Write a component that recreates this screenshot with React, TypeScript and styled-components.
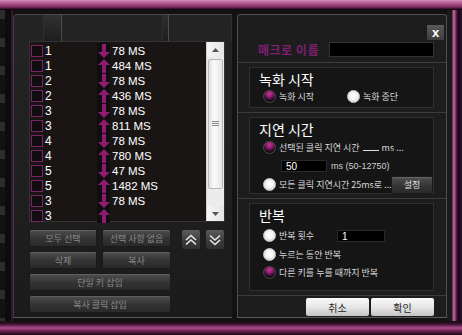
import React from 'react'
import styled, { createGlobalStyle } from 'styled-components'

const colors = {
  magenta: '#8e1c6e',
  panel: '#1d1d1d',
  box: '#151515',
  line: '#3a3a3a',
  text: '#e6e6e6',
  dim: '#9a9a9a'
}

const kr = `"Noto Sans CJK KR", "Noto Sans", sans-serif`
const latin = `"Liberation Sans", Arial, sans-serif`

const GlobalStyle = createGlobalStyle`
  html, body { margin: 0; padding: 0; background: #000; }
`

const Screen = styled.div`
  width: 462px;
  height: 335px;
  display: flex;
  flex-direction: column;
  background: #000;
  overflow: hidden;
`

const TopBar = styled.div`
  height: 10px;
  flex: none;
  background: linear-gradient(#d491bd 0, #b55a92 3px, #7d2c61 7px, #2a0c20 9px, #000 10px);
`

const Middle = styled.div`
  display: flex;
  height: 311px;
  flex: none;
`

const LeftStrip = styled.div`
  width: 11px;
  flex: none;
  border-right: 2px solid #3a1430;
  background:
    linear-gradient(90deg, transparent 5px, #0c0c0c 5px),
    repeating-linear-gradient(#2c2c2c 0 9px, #121212 9px 28px);
`

const Body = styled.div`
  flex: 1;
  display: flex;
  gap: 5px;
  padding-top: 4px;
  padding-bottom: 3px;
  background: #121212;
`

const RightFrame = styled.div`
  width: 15px;
  flex: none;
  background: linear-gradient(90deg, #1a1a1a 0 5px, #5c2249 5px, #c070a0 7px, #6a2452 9px, #140a12 11px, #2a1030 15px);
`

const BottomBar = styled.div`
  height: 14px;
  flex: none;
  background: linear-gradient(#0e0e0e 0, #3a1030 3px, #b04e8e 7px, #6a2050 10px, #1a0814 14px);
`

/* ---------- left panel ---------- */

const LeftPanel = styled.div`
  width: 218px;
  flex: none;
  display: flex;
  flex-direction: column;
  border-top: 1px solid #4a4a4a;
  border-left: 1px solid #3e3e3e;
  border-bottom: 1px solid #5a5a5a;
  border-radius: 4px 0 0 0;
  background: linear-gradient(#242424, #1b1b1b);
`

const HeaderRow = styled.div`
  display: flex;
  height: 26px;
`

const HeaderCell = styled.div<{ w?: number; lit?: boolean }>`
  width: ${p => (p.w ? `${p.w}px` : 'auto')};
  flex: ${p => (p.w ? 'none' : '1')};
  border-right: 1px solid ${p => (p.lit ? '#4c4c4c' : '#2e2e2e')};
  background: ${p => (p.lit ? 'linear-gradient(#303030, #1e1e1e)' : 'transparent')};
`

const ListBox = styled.div`
  margin-left: 15px;
  width: 194px;
  height: 179px;
  display: flex;
  border: 1px solid #333;
  background: #1a1515;
`

const Rows = styled.div`
  flex: 1;
  padding-top: 1px;
  display: flex;
  flex-direction: column;
`

const Row = styled.div`
  display: flex;
  align-items: center;
  height: 15px;
`

const Check = styled.div`
  width: 10px;
  height: 10px;
  margin-left: 1px;
  border: 1px solid #7a2468;
  background: #100c10;
`

const Num = styled.span`
  width: 52px;
  padding-left: 2px;
  font: 12px ${latin};
  color: #fff;
`

const ArrowCell = styled.div`
  width: 13px;
  height: 15px;
  display: flex;
  align-items: center;
  justify-content: center;
  background: #0f0d0e;
`

const Delay = styled.span`
  padding-left: 2px;
  font: 11.5px ${latin};
  color: #fff;
`

const ScrollBar = styled.div`
  width: 17px;
  display: flex;
  flex-direction: column;
  background: #ececec;
  border-left: 1px solid #d0d0d0;
`

const ScrollBtn = styled.div`
  height: 15px;
  display: flex;
  align-items: center;
  justify-content: center;
  background: linear-gradient(90deg, #f6f6f6, #e4e4e4);
`

const ScrollTrack = styled.div`
  flex: 1;
  display: flex;
  flex-direction: column;
  padding: 2px 1px;
`

const Thumb = styled.div`
  height: 128px;
  border: 1px solid #b8b8b8;
  border-radius: 2px;
  background: linear-gradient(90deg, #e2e2e2, #fafafa 40%, #e6e6e6);
  display: flex;
  align-items: center;
  justify-content: center;
`

const Grip = styled.div`
  width: 7px;
  height: 6px;
  background: repeating-linear-gradient(#8a8a8a 0 1px, transparent 1px 2px);
`

const Controls = styled.div`
  display: flex;
  gap: 10px;
  margin: 7px 0 0 15px;
`

const ButtonGrid = styled.div`
  display: grid;
  grid-template-columns: 68px 69px;
  grid-auto-rows: 18px;
  column-gap: 5px;
  row-gap: 4px;
`

const DarkButton = styled.div<{ wide?: boolean }>`
  grid-column: ${p => (p.wide ? '1 / 3' : 'auto')};
  display: flex;
  align-items: center;
  justify-content: center;
  border: 1px solid #1a1a1a;
  border-radius: 2px;
  background: linear-gradient(#4e4e4e, #333 55%, #2a2a2a);
  box-shadow: inset 0 1px 0 #606060;
  color: #8a8a8a;
  font: 9px ${kr};
`

const ArrowButtons = styled.div`
  display: flex;
  gap: 4px;
`

const MoveButton = styled.div`
  width: 18px;
  height: 19px;
  display: flex;
  align-items: center;
  justify-content: center;
  border: 1px solid #1e1e1e;
  border-radius: 3px;
  background: linear-gradient(#5c5c5c, #3a3a3a 60%, #303030);
`

/* ---------- right panel ---------- */

const RightPanel = styled.div`
  flex: 1;
  display: flex;
  flex-direction: column;
  border: 1px solid #4e4e4e;
  border-bottom-color: #5a5a5a;
  border-radius: 3px 3px 0 0;
  background: ${colors.panel};
`

const CloseRow = styled.div`
  display: flex;
  justify-content: flex-end;
  margin-top: 10px;
  padding-right: 2px;
`

const CloseButton = styled.div`
  width: 17px;
  height: 15px;
  display: flex;
  align-items: center;
  justify-content: center;
  background: linear-gradient(#5a5a5a, #3c3c3c);
  color: #fff;
  font: bold 13px ${latin};
  line-height: 15px;
`

const NameRow = styled.div`
  display: flex;
  align-items: center;
  height: 14px;
  margin-top: 2px;
  padding: 0 12px 0 20px;
  gap: 10px;
`

const NameLabel = styled.span`
  font: bold 12px ${kr};
  color: #7e1f70;
  letter-spacing: 0.5px;
`

const NameInput = styled.div`
  flex: 1;
  height: 13px;
  background: #000;
  border: 1px solid #333;
`

const SectionWrap = styled.div<{ first?: boolean }>`
  padding: 4px 12px 4px 11px;
  border-top: 1px solid #3c3c3c;
  margin-top: ${p => (p.first ? '6px' : '0')};
`

const SectionBox = styled.div<{ h: number }>`
  height: ${p => p.h}px;
  box-sizing: border-box;
  border: 1px solid #303030;
  background: ${colors.box};
  padding: 3px 0 0 9px;
  display: flex;
  flex-direction: column;
`

const Heading = styled.div`
  font: 14px ${kr};
  color: #fff;
  line-height: 17px;
  height: 17px;
`

const OptionRow = styled.div<{ mt?: number; indent?: number }>`
  display: flex;
  align-items: center;
  height: 13px;
  margin-top: ${p => p.mt ?? 0}px;
  padding-left: ${p => p.indent ?? 4}px;
`

const Radio = styled.div<{ on?: boolean }>`
  width: 13px;
  height: 13px;
  flex: none;
  border-radius: 50%;
  box-sizing: border-box;
  background: ${p =>
    p.on
      ? 'radial-gradient(circle at 50% 25%, #c03a92 0, #8a1a6c 35%, #3a0f30 58%, #121012 72%)'
      : 'radial-gradient(circle at 50% 45%, #ffffff 0, #f4f4f4 45%, #cfcfcf 80%, #9a9a9a 100%)'};
  border: 1px solid ${p => (p.on ? '#4a4a4a' : '#d0d0d0')};
`

const OptionLabel = styled.span<{ w?: number }>`
  margin-left: 3px;
  width: ${p => (p.w ? `${p.w}px` : 'auto')};
  font: 9px ${kr};
  color: #d8d8d8;
  white-space: nowrap;
`

const Blank = styled.span`
  display: inline-block;
  width: 16px;
  margin: 0 3px;
  border-bottom: 1px solid #ddd;
`

const Field = styled.div<{ w: number }>`
  width: ${p => p.w}px;
  height: 12px;
  background: #000;
  border: 1px solid #2a2a2a;
  font: 10px ${latin};
  color: #fff;
  line-height: 12px;
  padding-left: 4px;
  box-sizing: border-box;
`

const Hint = styled.span`
  margin-left: 4px;
  font: 9px ${latin};
  color: #d0d0d0;
`

const SetButton = styled.div`
  width: 40px;
  height: 16px;
  margin-left: 6px;
  display: flex;
  align-items: center;
  justify-content: center;
  border: 1px solid #1a1a1a;
  border-radius: 2px;
  background: linear-gradient(#505050, #333 60%, #2a2a2a);
  box-shadow: inset 0 1px 0 #666;
  color: #e0e0e0;
  font: 9px ${kr};
`

const Footer = styled.div`
  display: flex;
  justify-content: flex-end;
  gap: 2px;
  padding: 2px 12px 0 0;
  border-top: 1px solid #3c3c3c;
`

const LightButton = styled.div`
  width: 63px;
  height: 18px;
  display: flex;
  align-items: center;
  justify-content: center;
  border-radius: 2px;
  background: linear-gradient(#fafafa, #e6e6e6 50%, #c4c4c4);
  color: #222;
  font: 10px ${kr};
`

const Arrow = ({ up }: { up?: boolean }) => (
  <svg width="12" height="14" viewBox="0 0 12 14">
    <path
      d={up ? 'M6 0 L12 6 L8 6 L8 14 L4 14 L4 6 L0 6 Z' : 'M4 0 L8 0 L8 8 L12 8 L6 14 L0 8 L4 8 Z'}
      fill={colors.magenta}
    />
  </svg>
)

const Chevrons = ({ up }: { up?: boolean }) => (
  <svg width="12" height="12" viewBox="0 0 12 12">
    <path
      d={up ? 'M1 6 L6 1.5 L11 6 M1 10.5 L6 6 L11 10.5' : 'M1 1.5 L6 6 L11 1.5 M1 6 L6 10.5 L11 6'}
      stroke="#e8e8e8"
      strokeWidth="1.6"
      fill="none"
    />
  </svg>
)

const Tri = ({ up }: { up?: boolean }) => (
  <svg width="7" height="4" viewBox="0 0 7 4">
    <path d={up ? 'M0 4 L3.5 0 L7 4 Z' : 'M0 0 L3.5 4 L7 0 Z'} fill="#555" />
  </svg>
)

const steps = [
  { key: '1', up: false, ms: '78 MS' },
  { key: '1', up: true, ms: '484 MS' },
  { key: '2', up: false, ms: '78 MS' },
  { key: '2', up: true, ms: '436 MS' },
  { key: '3', up: false, ms: '78 MS' },
  { key: '3', up: true, ms: '811 MS' },
  { key: '4', up: false, ms: '78 MS' },
  { key: '4', up: true, ms: '780 MS' },
  { key: '5', up: false, ms: '47 MS' },
  { key: '5', up: true, ms: '1482 MS' },
  { key: '3', up: false, ms: '78 MS' },
  { key: '3', up: true, ms: '' }
]

const MacroEditor = () => {
  return (
    <Screen>
      <GlobalStyle />
      <TopBar />
      <Middle>
        <LeftStrip />
        <Body>
          <LeftPanel>
            <HeaderRow>
              <HeaderCell w={29} />
              <HeaderCell w={17} lit />
              <HeaderCell w={100} />
              <HeaderCell w={5} lit />
              <HeaderCell />
            </HeaderRow>
            <ListBox>
              <Rows>
                {steps.map((s, i) => (
                  <Row key={i}>
                    <Check />
                    <Num>{s.key}</Num>
                    <ArrowCell>
                      <Arrow up={s.up} />
                    </ArrowCell>
                    <Delay>{s.ms}</Delay>
                  </Row>
                ))}
              </Rows>
              <ScrollBar>
                <ScrollBtn><Tri up /></ScrollBtn>
                <ScrollTrack>
                  <Thumb><Grip /></Thumb>
                </ScrollTrack>
                <ScrollBtn><Tri /></ScrollBtn>
              </ScrollBar>
            </ListBox>
            <Controls>
              <ButtonGrid>
                <DarkButton>모두 선택</DarkButton>
                <DarkButton>선택 사항 없음</DarkButton>
                <DarkButton>삭제</DarkButton>
                <DarkButton>복사</DarkButton>
                <DarkButton wide>단일 키 삽입</DarkButton>
                <DarkButton wide>복사 클릭 삽입</DarkButton>
              </ButtonGrid>
              <ArrowButtons>
                <MoveButton><Chevrons up /></MoveButton>
                <MoveButton><Chevrons /></MoveButton>
              </ArrowButtons>
            </Controls>
          </LeftPanel>
          <RightPanel>
            <CloseRow>
              <CloseButton>x</CloseButton>
            </CloseRow>
            <NameRow>
              <NameLabel>매크로 이름</NameLabel>
              <NameInput />
            </NameRow>
            <SectionWrap first>
              <SectionBox h={41}>
                <Heading>녹화 시작</Heading>
                <OptionRow mt={2}>
                  <Radio on />
                  <OptionLabel w={68}>녹화 시작</OptionLabel>
                  <Radio />
                  <OptionLabel>녹화 중단</OptionLabel>
                </OptionRow>
              </SectionBox>
            </SectionWrap>
            <SectionWrap>
              <SectionBox h={77}>
                <Heading>지연 시간</Heading>
                <OptionRow mt={3}>
                  <Radio on />
                  <OptionLabel>선택된 클릭 지연 시간<Blank />ms ...</OptionLabel>
                </OptionRow>
                <OptionRow mt={5} indent={22}>
                  <Field w={46}>50</Field>
                  <Hint>ms (50-12750)</Hint>
                </OptionRow>
                <OptionRow mt={6}>
                  <Radio />
                  <OptionLabel w={106}>모든 클릭 지연시간 25ms로 ...</OptionLabel>
                  <SetButton>설정</SetButton>
                </OptionRow>
              </SectionBox>
            </SectionWrap>
            <SectionWrap>
              <SectionBox h={88}>
                <Heading>반복</Heading>
                <OptionRow mt={5}>
                  <Radio />
                  <OptionLabel w={58}>반복 횟수</OptionLabel>
                  <Field w={48}>1</Field>
                </OptionRow>
                <OptionRow mt={6}>
                  <Radio />
                  <OptionLabel>누르는 동안 반복</OptionLabel>
                </OptionRow>
                <OptionRow mt={5}>
                  <Radio on />
                  <OptionLabel>다른 키를 누를 때까지 반복</OptionLabel>
                </OptionRow>
              </SectionBox>
            </SectionWrap>
            <Footer>
              <LightButton>취소</LightButton>
              <LightButton>확인</LightButton>
            </Footer>
          </RightPanel>
        </Body>
        <RightFrame />
      </Middle>
      <BottomBar />
    </Screen>
  )
}

export default MacroEditor
